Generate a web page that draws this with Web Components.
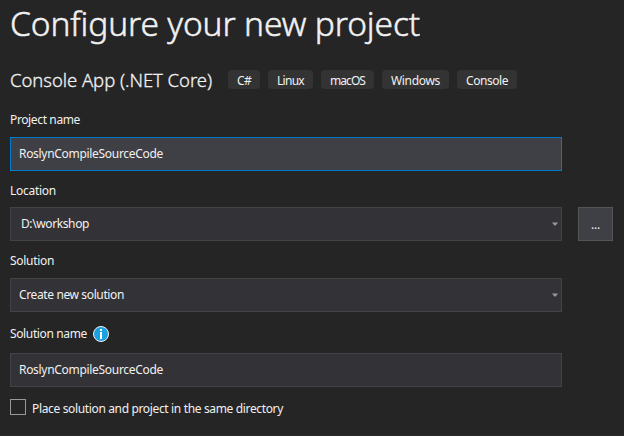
<!DOCTYPE html>
<html lang="en">
<head>
<meta charset="utf-8">
<title>Configure your new project</title>
<style>
html,body{margin:0;height:100%;background:#252526;overflow:hidden}
body{font-family:"Noto Sans","Open Sans",sans-serif;font-size:12px;color:#f1f1f1}
</style>
</head>
<body>
<project-page></project-page>
<script>
const define=(name,html,setup)=>{
  const t=document.createElement('template');
  t.innerHTML=html;
  customElements.define(name,class extends HTMLElement{
    connectedCallback(){
      if(this.shadowRoot)return;
      this.attachShadow({mode:'open'}).append(t.content.cloneNode(true));
      if(setup)setup(this,this.shadowRoot);
    }
  });
};

/* Text run whose tracking is adjusted to fill the width given in its "w" attribute. */
define('fit-text',`<style>:host{display:inline-block;white-space:pre;flex:none;line-height:16px}span{display:inline-block}</style><span><slot></slot></span>`,(el,root)=>{
  const w=+el.getAttribute('w'),s=root.querySelector('span');
  const n=el.textContent.length;
  s.style.letterSpacing=((w-s.getBoundingClientRect().width)/n)+'px';
  el.style.width=w+'px';
});

define('tag-chip',`<style>:host{display:flex;box-sizing:border-box;height:19px;padding:2px 9px 0;border-radius:4px;background:#333334;align-items:center;flex:none}</style><slot></slot>`);

define('text-field',`<style>
:host{display:flex;box-sizing:border-box;width:552px;height:34px;padding:0 3px 0 8px;border:1px solid #434346;background:#333337;align-items:center;justify-content:space-between;flex:none}
:host([active]){border-color:#007acc;background:#3f3f46}
:host([inset]){padding-left:10px}
svg{display:none}:host([dropdown]) svg{display:block}
</style><slot></slot><svg width="6" height="4" viewBox="0 0 6 4"><path d="M0 .5H6L3.6 3.5H2.4Z" fill="#999"/></svg>`);

define('browse-button',`<style>:host{display:flex;box-sizing:border-box;width:35px;height:34px;padding-top:1px;border:1px solid #555555;background:#3f3f46;align-items:center;justify-content:center;flex:none}</style><slot></slot>`);

define('info-icon',`<style>:host{display:block;width:16px;height:16px}svg{display:block}</style>
<svg width="16" height="16" viewBox="0 0 16 16"><circle cx="8" cy="8" r="7.5" fill="#1ba1e2" stroke="#f1f1f1"/><path d="M7 3h2v2H7zM7 6h2v7H7z" fill="#fff"/></svg>`);

define('check-box',`<style>:host{display:flex;gap:6px;height:16px}i{display:block;box-sizing:border-box;width:16px;height:16px;border:1px solid #999;background:#252526}div{padding-top:1px}</style><i></i><div><slot></slot></div>`);

define('project-page',`<style>
:host{display:flex;flex-direction:column;box-sizing:border-box;width:624px;height:436px;padding:0 0 0 10px;border-bottom:1px solid #2a282b;background:#252526}
h1{margin:0;height:61px;font-weight:300;font-size:33.5px;-webkit-text-stroke:.5px #f1f1f1}
h1 fit-text{line-height:46px}
.head{display:flex;height:49px;padding-top:9px;box-sizing:border-box;gap:16px}
.head>fit-text{font-size:18.5px;line-height:20px;font-weight:300;-webkit-text-stroke:.3px #f1f1f1}
.tags{display:flex;gap:8px}
.label{display:flex;height:27px;padding-top:2px;box-sizing:border-box}
.after{height:36px;padding-top:12px}
.sol{height:37px;padding-top:12px}
.name{height:41px;padding-top:14px;gap:6px}
.row{display:flex;gap:16px}
check-box{margin-top:12px}
</style>
<h1><fit-text w="410">Configure your new project</fit-text></h1>
<div class="head"><fit-text w="202">Console App (.NET Core)</fit-text>
<div class="tags"><tag-chip><fit-text w="14">C#</fit-text></tag-chip><tag-chip><fit-text w="27">Linux</fit-text></tag-chip><tag-chip><fit-text w="35">macOS</fit-text></tag-chip><tag-chip><fit-text w="49">Windows</fit-text></tag-chip><tag-chip><fit-text w="42">Console</fit-text></tag-chip></div></div>
<div class="label"><fit-text w="70">Project name</fit-text></div>
<text-field active><fit-text w="144">RoslynCompileSourceCode</fit-text></text-field>
<div class="label after"><fit-text w="46">Location</fit-text></div>
<div class="row"><text-field dropdown inset><fit-text w="68">D:\\workshop</fit-text></text-field><browse-button><fit-text w="9">...</fit-text></browse-button></div>
<div class="label sol"><fit-text w="44">Solution</fit-text></div>
<text-field dropdown><fit-text w="105">Create new solution</fit-text></text-field>
<div class="label name"><fit-text w="77">Solution name</fit-text><info-icon></info-icon></div>
<text-field><fit-text w="144">RoslynCompileSourceCode</fit-text></text-field>
<check-box><fit-text w="251">Place solution and project in the same directory</fit-text></check-box>`);
</script>
</body>
</html>
